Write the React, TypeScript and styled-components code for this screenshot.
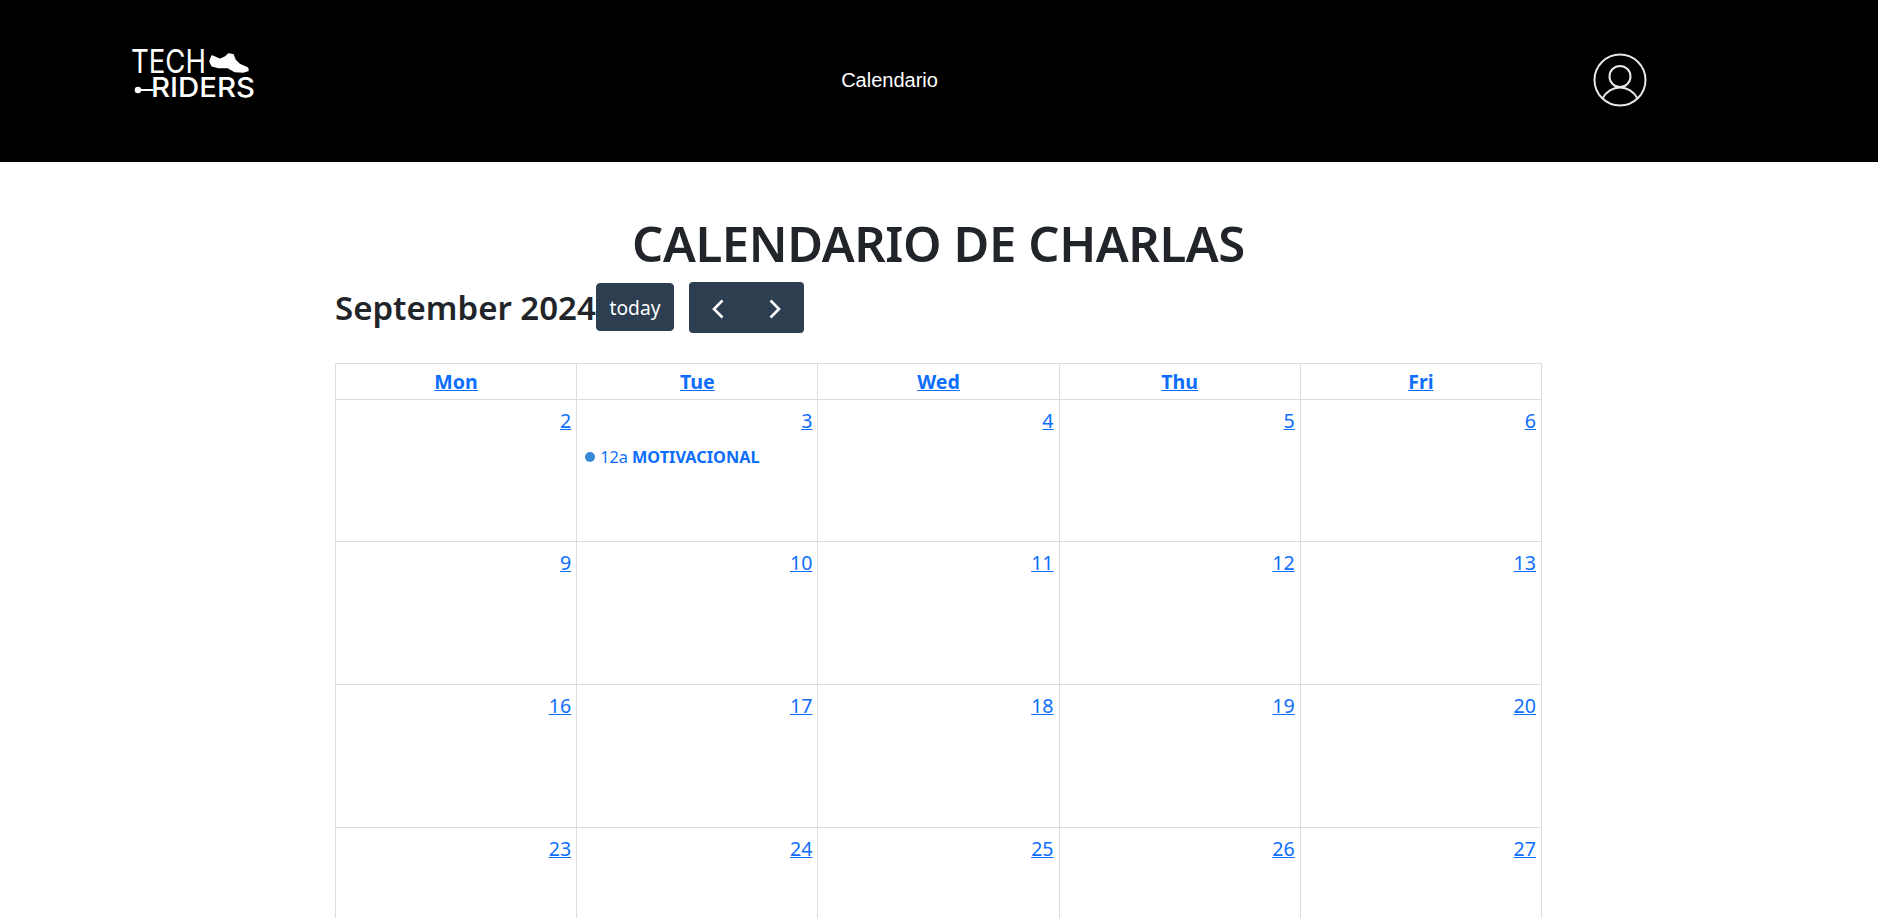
import React from "react";
import styled, { createGlobalStyle } from "styled-components";

const GlobalStyle = createGlobalStyle`
  html, body {
    margin: 0;
    padding: 0;
    background: #fff;
    color: #212529;
    font-family: "Noto Sans", "Open Sans", sans-serif;
  }
`;

const Header = styled.header`
  height: 162px;
  background: #000;
  display: grid;
  grid-template-columns: 132px 124px 1fr 54px 231px;
  align-items: center;
`;

const LogoWrap = styled.div`
  grid-column: 2;
  display: flex;
  margin-left: -2px;
`;

const NavLink = styled.a`
  grid-column: 3;
  color: #fff;
  font-family: "Liberation Sans", Arial, sans-serif;
  font-size: 20px;
  text-align: center;
  padding: 0 70px 2px 0;
`;

const Avatar = styled.div`
  grid-column: 4;
  display: flex;
  margin-top: -2px;
`;

const Main = styled.main`
  width: 1207px;
  margin: 0 0 0 335px;
  padding-top: 52px;
`;

const Title = styled.h1`
  margin: 0;
  font-size: 49px;
  line-height: 58px;
  font-weight: 600;
  text-align: center;
  letter-spacing: -0.4px;
`;

const Toolbar = styled.div`
  display: flex;
  align-items: center;
  height: 52px;
  margin: 9px 0 30px;
`;

const MonthTitle = styled.h2`
  margin: 0;
  font-size: 33px;
  font-weight: 600;
  line-height: 38px;
  width: 261px;
  white-space: nowrap;
  padding-top: 2px;
`;

const ToolButton = styled.button`
  height: 48px;
  width: 78px;
  border: 1px solid #2c3e50;
  border-radius: 4px;
  background: #2c3e50;
  color: #fff;
  font: inherit;
  font-size: 19.2px;
  padding: 0;
`;

const ButtonGroup = styled.div`
  display: flex;
  width: 115px;
  height: 51px;
  margin-left: 15px;
  border-radius: 4px;
  background: #2c3e50;
`;

const ArrowButton = styled.button`
  flex: 1;
  border: 0;
  background: transparent;
  color: #fff;
  padding: 3px 0 0;
  display: flex;
  align-items: center;
  justify-content: center;
`;

const Calendar = styled.table`
  width: 100%;
  border-collapse: collapse;
  table-layout: fixed;
`;

const HeadCell = styled.th`
  height: 35px;
  padding: 0;
  border: 1px solid #ddd;
  font-size: 19.6px;
  font-weight: 700;
  text-align: center;
  vertical-align: middle;
`;

const DayCell = styled.td`
  height: 142px;
  padding: 0;
  border: 1px solid #ddd;
  vertical-align: top;

  tr:first-child > & {
    height: 141px;
  }
`;

const DayLink = styled.a`
  color: #0d6efd;
  text-decoration: underline;
`;

const DayNumber = styled.div`
  text-align: right;
  padding: 7px 5px 0 0;
  font-size: 19.6px;
  line-height: 28px;
`;

const Event = styled.div`
  display: flex;
  align-items: center;
  margin: 11px 0 0 8px;
  font-size: 16.3px;
  line-height: 22px;
  color: #0d6efd;
  white-space: nowrap;
`;

const EventDot = styled.span`
  width: 10px;
  height: 10px;
  border-radius: 50%;
  background: #3788d8;
  margin-right: 5px;
`;

const EventTime = styled.span`
  margin-right: 4px;
`;

const EventTitle = styled.b`
  font-weight: 700;
`;

const days = ["Mon", "Tue", "Wed", "Thu", "Fri"];
const weeks = [
  [2, 3, 4, 5, 6],
  [9, 10, 11, 12, 13],
  [16, 17, 18, 19, 20],
  [23, 24, 25, 26, 27],
];

const Logo = () => (
  <svg width="126" height="84" viewBox="-2 -8 126 84" fill="#fff">
    <text x="-1" y="26" fontFamily="Inter, sans-serif" fontSize="32" fontWeight="400" textLength="75" lengthAdjust="spacingAndGlyphs">
      TECH
    </text>
    <text x="19" y="50" fontFamily="Inter, sans-serif" fontSize="27.5" fontWeight="500" textLength="104" lengthAdjust="spacingAndGlyphs">
      RIDERS
    </text>
    {/* bike silhouette next to the wordmark */}
    <polygon
      points="80,9 88,12.500 93.500,10 96.500,7 101,7.800 103,13 107.500,17.500 115.500,21 116,23.500 111,25 103,24.500 96,20.500 86.500,20.500 80,18.800 78,14.300"
      stroke="#fff"
      strokeWidth="1.600"
      strokeLinejoin="round"
    />
    <circle cx="6" cy="43" r="3.300" />
    <rect x="6" y="42" width="15" height="2" />
  </svg>
);

const UserIcon = () => (
  <svg width="54" height="54" viewBox="0 0 54 54" fill="none" stroke="#e8e8e8" strokeWidth="2">
    <circle cx="27" cy="27" r="25.500" />
    <circle cx="27" cy="23.500" r="10.500" />
    <path d="M9.500 45.500C13 38.500 20 34.500 27 34.500s14 4 17.500 11" />
  </svg>
);

const App = () => (
  <>
    <GlobalStyle />
    <Header>
      <LogoWrap>
        <Logo />
      </LogoWrap>
      <NavLink>Calendario</NavLink>
      <Avatar>
        <UserIcon />
      </Avatar>
    </Header>
    <Main>
      <Title>CALENDARIO DE CHARLAS</Title>
      <Toolbar>
        <MonthTitle>September 2024</MonthTitle>
        <ToolButton>today</ToolButton>
        <ButtonGroup>
          <ArrowButton aria-label="prev">
            <svg width="20" height="20" viewBox="0 0 20 20" fill="none" stroke="#fff" strokeWidth="2.600">
              <path d="M14.500 1.500L6 10l8.500 8.500" />
            </svg>
          </ArrowButton>
          <ArrowButton aria-label="next">
            <svg width="20" height="20" viewBox="0 0 20 20" fill="none" stroke="#fff" strokeWidth="2.600">
              <path d="M5.500 1.500L14 10l-8.500 8.500" />
            </svg>
          </ArrowButton>
        </ButtonGroup>
      </Toolbar>
      <Calendar>
        <thead>
          <tr>
            {days.map((d) => (
              <HeadCell key={d}>
                <DayLink>{d}</DayLink>
              </HeadCell>
            ))}
          </tr>
        </thead>
        <tbody>
          {weeks.map((week) => (
            <tr key={week[0]}>
              {week.map((n) => (
                <DayCell key={n}>
                  <DayNumber>
                    <DayLink>{n}</DayLink>
                  </DayNumber>
                  {n === 3 && (
                    <Event>
                      <EventDot />
                      <EventTime>12a</EventTime>
                      <EventTitle>MOTIVACIONAL</EventTitle>
                    </Event>
                  )}
                </DayCell>
              ))}
            </tr>
          ))}
        </tbody>
      </Calendar>
    </Main>
  </>
);

export default App;
